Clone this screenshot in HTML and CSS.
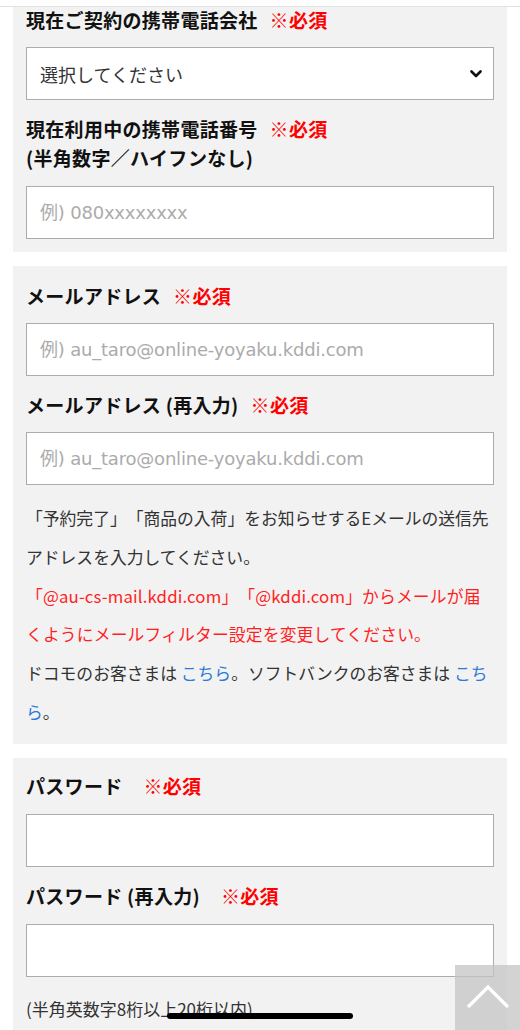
FILE: index.html
```html
<!DOCTYPE html>
<html lang="ja">
<head>
<meta charset="utf-8">
<title>予約フォーム</title>
<link rel="stylesheet" href="styles.css">
</head>
<body>
<div class="topbar"></div>
<main class="form">
  <section class="panel panel-first">
    <div class="label">現在ご契約の携帯電話会社<span class="req">※必須</span></div>
    <div class="select-wrap">
      <select class="select">
        <option>選択してください</option>
      </select>
      <svg class="chev" width="12" height="8" viewBox="0 0 12 8"><path d="M1.5 1.5 L6 6 L10.5 1.5" fill="none" stroke="#111" stroke-width="2.6" stroke-linecap="round" stroke-linejoin="round"/></svg>
    </div>
    <div class="label">現在利用中の携帯電話番号<span class="req">※必須</span><br>(半角数字／ハイフンなし)</div>
    <input class="input" type="text" placeholder="例) 080xxxxxxxx">
  </section>

  <section class="panel">
    <div class="label">メールアドレス<span class="req">※必須</span></div>
    <input class="input" type="text" placeholder="例) au_taro@online-yoyaku.kddi.com">
    <div class="label">メールアドレス (再入力)<span class="req">※必須</span></div>
    <input class="input" type="text" placeholder="例) au_taro@online-yoyaku.kddi.com">
    <div class="note">
      <p>「予約完了」「商品の入荷」をお知らせするEメールの送信先アドレスを入力してください。</p>
      <p class="warn">「@au-cs-mail.kddi.com」「@kddi.com」からメールが届くようにメールフィルター設定を変更してください。</p>
      <p>ドコモのお客さまは <a href="#">こちら</a>。ソフトバンクのお客さまは <a href="#">こちら</a>。</p>
    </div>
  </section>

  <section class="panel panel-last">
    <div class="label">パスワード<span class="req req-wide">※必須</span></div>
    <input class="input" type="password">
    <div class="label">パスワード (再入力)<span class="req req-wide">※必須</span></div>
    <input class="input" type="password">
    <p class="hint">(半角英数字8桁以上20桁以内)</p>
  </section>
</main>

<a class="pagetop" href="#" aria-label="ページトップへ">
  <svg width="44" height="26" viewBox="0 0 44 26"><path d="M2 23 L22 3 L42 23" fill="none" stroke="#fff" stroke-width="3.2"/></svg>
</a>
<div class="home-indicator"></div>
</body>
</html>
```

FILE: styles.css
```css
html, body {
  margin: 0;
  padding: 0;
  background: #fff;
}

body {
  font-family: "Noto Sans CJK JP", "Noto Sans", sans-serif;
  color: #1a1a1a;
  width: 520px;
  overflow: hidden;
  text-spacing-trim: space-all;
}

.topbar {
  height: 6px;
  background: #fff;
  border-bottom: 1px solid #e2e2e2;
}

.form {
  display: flex;
  flex-direction: column;
  gap: 14px;
  padding: 0 13px 40px;
}

.panel {
  background: #f2f2f2;
  padding: 15px 13px 12px;
  display: flex;
  flex-direction: column;
}

.panel-first {
  padding-top: 0;
  padding-bottom: 13px;
}

.panel-last {
  padding-top: 13px;
}

.label {
  font-size: 19px;
  font-weight: 700;
  line-height: 29px;
  letter-spacing: 0.3px;
  color: #111;
  margin: 14px 0 13px;
}

.panel > .label:first-child {
  margin-top: 0;
}

.panel-first > .label,
.panel-last > .label {
  margin: 14px 0 14px;
}

.panel-first > .label:nth-of-type(2) {
  margin-top: 15px;
}

.panel-first > .label:first-child,
.panel-last > .label:first-child {
  margin-top: 0;
}

.panel-first > .label:first-child {
  line-height: 26px;
}

.req {
  color: #ff0000;
  margin-left: 12px;
}

.req-wide {
  margin-left: 21px;
}

.select-wrap {
  position: relative;
}

.select {
  appearance: none;
  -webkit-appearance: none;
  width: 100%;
  height: 53px;
  box-sizing: border-box;
  border: 1px solid #acacac;
  border-radius: 0;
  background: #fff;
  padding: 0 40px 0 13px;
  font-family: "Noto Sans CJK JP", "Noto Sans", sans-serif;
  font-size: 18px;
  color: #333;
  margin: 0;
}

.chev {
  position: absolute;
  right: 12px;
  top: 23px;
  pointer-events: none;
}

.input {
  display: block;
  width: 100%;
  height: 53px;
  box-sizing: border-box;
  border: 1px solid #acacac;
  border-radius: 0;
  background: #fff;
  padding: 0 13px;
  font-family: "DejaVu Sans", "Noto Sans CJK JP", sans-serif;
  font-size: 18px;
  letter-spacing: -0.2px;
  color: #333;
  margin: 0;
  outline: none;
}

.input::placeholder {
  color: #ababab;
}

.note {
  margin-top: 14px;
  font-size: 16.8px;
  line-height: 38.8px;
  color: #333;
}

.note p {
  margin: 0;
}

.note .warn {
  color: #ff1f1f;
  letter-spacing: 0.15px;
}

.note a {
  color: #2e7ad8;
  text-decoration: none;
}

.hint {
  margin: 17px 0 0;
  font-size: 17px;
  line-height: 30px;
  color: #333;
}

.pagetop {
  position: fixed;
  right: 0;
  bottom: 0;
  width: 65px;
  height: 65px;
  background: rgba(196, 196, 196, 0.75);
  display: flex;
  align-items: center;
  justify-content: center;
}

.pagetop svg {
  margin-top: -2px;
}

.home-indicator {
  position: fixed;
  left: 167px;
  bottom: 11px;
  width: 186px;
  height: 6px;
  border-radius: 3px;
  background: #000;
}
```
